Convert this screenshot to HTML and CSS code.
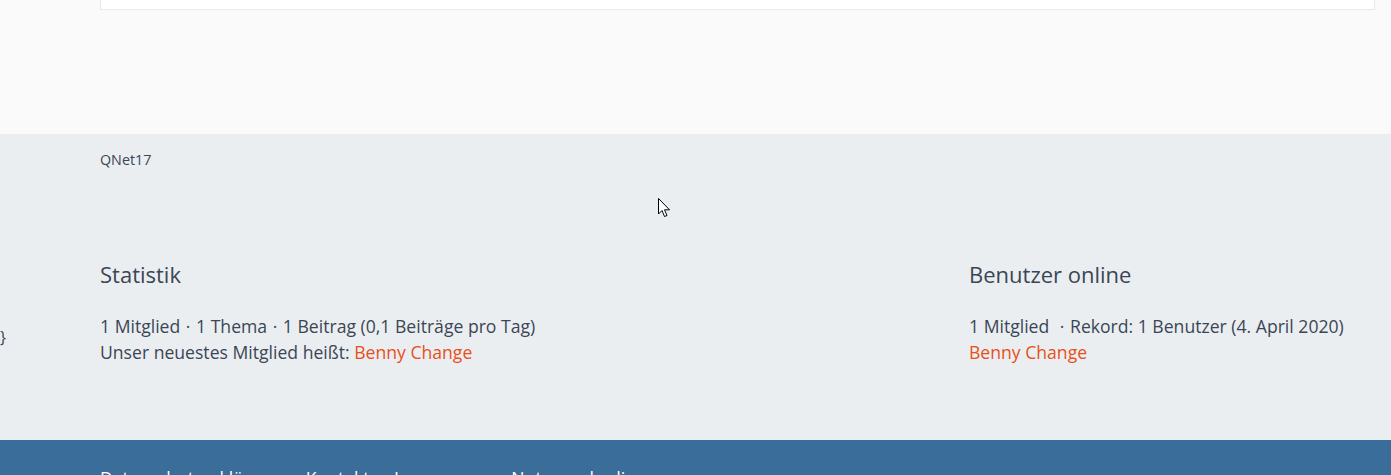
FILE: index.html
```html
<!DOCTYPE html>
<html lang="de">
<head>
<meta charset="utf-8">
<title>QNet17</title>
<link rel="stylesheet" href="styles.css">
</head>
<body>
<div class="main">
  <div class="content-box"></div>
</div>
<div class="footer-boxes">
  <div class="wrap">
    <div class="copyright">QNet17</div>
    <div class="boxes">
      <section class="box">
        <h2 class="box-title">Statistik</h2>
        <p class="line">1 Mitglied <span class="sep">·</span> 1 Thema <span class="sep">·</span> 1 Beitrag (0,1 Beiträge pro Tag)</p>
        <p class="line">Unser neuestes Mitglied heißt: <a class="user" href="#">Benny Change</a></p>
      </section>
      <section class="box">
        <h2 class="box-title">Benutzer online</h2>
        <p class="line">1 Mitglied <span class="sep sep-wide">·</span> Rekord: 1 Benutzer (4. April 2020)</p>
        <p class="line"><a class="user" href="#">Benny Change</a></p>
      </section>
    </div>
  </div>
  <span class="stray">}</span>
  <svg class="cursor" width="13" height="21" viewBox="0 0 13 21"><path d="M0.5 0.5 L0.5 16 L4 12.5 L6.5 18.5 L9 17.5 L6.5 11.8 L11.5 11.8 Z" fill="#fff" stroke="#000" stroke-width="1"/></svg>
</div>
<footer class="page-footer">
  <nav class="footer-nav">
    <a href="#">Datenschutzerklärung</a>
    <a href="#">Kontakt</a>
    <a href="#">Impressum</a>
    <a href="#">Nutzungsbedingungen</a>
  </nav>
</footer>
</body>
</html>
```
FILE: styles.css
```css
* { box-sizing: border-box; }
html, body { margin: 0; padding: 0; }
body {
  font-family: "Open Sans", "Liberation Sans", sans-serif;
  color: #3a4655;
  background: #fafafa;
  overflow: hidden;
}
.main {
  background: #fafafa;
  height: 134px;
  padding: 0 16px 0 100px;
}
.content-box {
  height: 10px;
  background: #fff;
  border: 1px solid #e6eaf0;
  border-top: none;
}
.footer-boxes {
  position: relative;
  background: #ebeef1;
  height: 306px;
  padding: 17px 16px 0 100px;
}
.copyright {
  font-size: 14.3px;
  line-height: 18px;
  color: #3a4655;
}
.boxes {
  display: grid;
  grid-template-columns: 869px 1fr;
  margin-top: 90px;
}
.box-title {
  font-size: 22px;
  font-weight: 400;
  line-height: 30px;
  margin: 0 0 24px;
  color: #3a4655;
}
.line {
  margin: 0;
  font-size: 17.6px;
  line-height: 26px;
}
.sep {
  margin: 0 1px;
}
.sep-wide {
  margin-left: 6px;
}
.user {
  color: #e8501a;
  text-decoration: none;
}
.stray {
  position: absolute;
  left: 0;
  top: 190px;
  font-size: 16px;
  line-height: 26px;
  color: #3a4655;
}
.cursor {
  position: absolute;
  left: 658px;
  top: 64px;
}
.page-footer {
  background: #3a6d9a;
  height: 100px;
  padding: 27px 16px 0 100px;
}
.footer-nav {
  display: flex;
  gap: 24.5px;
}
.footer-nav a {
  color: #fff;
  text-decoration: none;
  font-size: 17.6px;
  line-height: 22px;
}
```
